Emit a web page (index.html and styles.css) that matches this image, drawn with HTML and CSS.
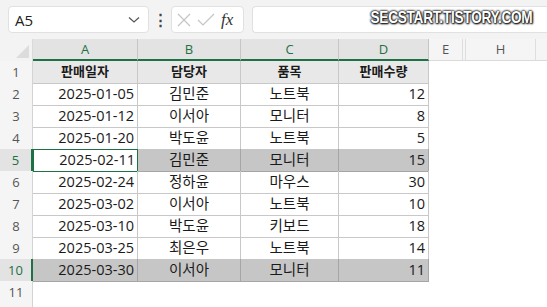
FILE: index.html
```html
<!DOCTYPE html>
<html lang="ko">
<head>
    <meta charset="UTF-8">
    <title>판매 내역</title>
    <link rel="stylesheet" href="styles.css">
</head>
<body>
<div class="toolbar">
    <div class="namebox">
        <span>A5</span>
        <svg width="12" height="8" viewBox="0 0 12 8"><path d="M1 1.5 L6 6 L11 1.5" fill="none" stroke="#555" stroke-width="1.2"/></svg>
    </div>
    <div class="dots">⋮</div>
    <div class="fxbox">
        <svg width="16" height="16" viewBox="0 0 16 16"><path d="M2 2 L14 14 M14 2 L2 14" stroke="#c4c4c4" stroke-width="1.2"/></svg>
        <svg width="18" height="16" viewBox="0 0 18 16"><path d="M1 8 L6 13 L17 2" fill="none" stroke="#c4c4c4" stroke-width="1.2"/></svg>
        <span class="fx">fx</span>
    </div>
    <div class="formula"></div>
    <div class="watermark">SECSTART.TISTORY.COM</div>
</div>

<div class="sheet">
    <div class="row hdr">
        <div class="corner"><span class="tri"></span></div>
        <div class="ch sel">A</div>
        <div class="ch sel">B</div>
        <div class="ch sel">C</div>
        <div class="ch sel">D</div>
        <div class="ch">E</div>
        <div class="ch hidden"></div>
        <div class="ch">H</div>
        <div class="ch last"></div>
    </div>
    <div class="row">
        <div class="rh">1</div>
        <div class="c head">판매일자</div>
        <div class="c head">담당자</div>
        <div class="c head">품목</div>
        <div class="c head">판매수량</div>
    </div>
    <div class="row">
        <div class="rh">2</div>
        <div class="c r">2025-01-05</div><div class="c m">김민준</div><div class="c m">노트북</div><div class="c r">12</div>
    </div>
    <div class="row">
        <div class="rh">3</div>
        <div class="c r">2025-01-12</div><div class="c m">이서아</div><div class="c m">모니터</div><div class="c r">8</div>
    </div>
    <div class="row">
        <div class="rh">4</div>
        <div class="c r">2025-01-20</div><div class="c m">박도윤</div><div class="c m">노트북</div><div class="c r">5</div>
    </div>
    <div class="row">
        <div class="rh sel">5</div>
        <div class="c r active">2025-02-11</div><div class="c m sel">김민준</div><div class="c m sel">모니터</div><div class="c r sel">15</div>
    </div>
    <div class="row">
        <div class="rh">6</div>
        <div class="c r">2025-02-24</div><div class="c m">정하윤</div><div class="c m">마우스</div><div class="c r">30</div>
    </div>
    <div class="row">
        <div class="rh">7</div>
        <div class="c r">2025-03-02</div><div class="c m">이서아</div><div class="c m">노트북</div><div class="c r">10</div>
    </div>
    <div class="row">
        <div class="rh">8</div>
        <div class="c r">2025-03-10</div><div class="c m">박도윤</div><div class="c m">키보드</div><div class="c r">18</div>
    </div>
    <div class="row">
        <div class="rh">9</div>
        <div class="c r">2025-03-25</div><div class="c m">최은우</div><div class="c m">노트북</div><div class="c r">14</div>
    </div>
    <div class="row">
        <div class="rh sel">10</div>
        <div class="c r sel">2025-03-30</div><div class="c m sel">이서아</div><div class="c m sel">모니터</div><div class="c r sel">11</div>
    </div>
    <div class="row">
        <div class="rh">11</div>
    </div>
    <div class="row stub">
        <div class="rh"></div>
    </div>
</div>
</body>
</html>
```

FILE: styles.css
```css
* {
    margin: 0;
    padding: 0;
    box-sizing: border-box;
}

body {
    font-family: "Open Sans", "Noto Sans CJK KR", sans-serif;
    background: #fff;
    color: #1a1a1a;
    width: 547px;
    height: 307px;
    overflow: hidden;
}

/* formula bar */
.toolbar {
    position: relative;
    height: 39px;
    background: #f3f3f3;
    display: flex;
    align-items: flex-start;
    padding: 6px 0 0 8px;
}

.namebox {
    width: 141px;
    height: 27px;
    background: #fff;
    border: 1px solid #e1e1e1;
    border-radius: 4px;
    display: flex;
    align-items: center;
    justify-content: space-between;
    padding: 0 8px 0 6px;
    font-size: 15px;
    color: #222;
}

.dots {
    width: 22px;
    text-align: center;
    font-size: 15px;
    line-height: 27px;
    color: #444;
    font-weight: bold;
}

.fxbox {
    width: 73px;
    height: 27px;
    background: #fff;
    border: 1px solid #e1e1e1;
    border-radius: 4px;
    display: flex;
    align-items: center;
    gap: 5px;
    padding: 0 0 0 4px;
}

.fx {
    font-family: "Liberation Serif", serif;
    font-style: italic;
    font-size: 17px;
    color: #333;
    margin-left: 1px;
}

.formula {
    flex: 1;
    height: 27px;
    margin-left: 8px;
    background: #fff;
    border: 1px solid #e1e1e1;
    border-right: none;
    border-radius: 4px 0 0 4px;
}

.watermark {
    position: absolute;
    right: 15px;
    top: 8px;
    font-family: "Liberation Sans", sans-serif;
    font-weight: bold;
    font-size: 17px;
    letter-spacing: -0.3px;
    color: #fff;
    transform: scaleX(0.8);
    transform-origin: right center;
    text-shadow: 0 0 2px #111, 0 0 2px #111, 0 0 3px #333, 1px 1px 2px #000;
}

/* grid */
.row {
    display: grid;
    grid-template-columns: 33px 105px 103px 98px 90px 34px 3px 70px 1fr;
    height: 22px;
}

.corner {
    background: #f3f3f3;
    border-right: 1px solid #dadada;
    position: relative;
}

.tri {
    position: absolute;
    right: 3px;
    bottom: 3px;
    width: 0;
    height: 0;
    border-left: 13px solid transparent;
    border-bottom: 13px solid #dcdcdc;
}

.ch {
    background: #f5f5f5;
    border-right: 1px solid #dedede;
    border-bottom: 1px solid #dadada;
    text-align: center;
    font-size: 13px;
    line-height: 21px;
    color: #555;
}

.ch.sel {
    background: #e3e3e3;
    color: #1e7145;
    border-right-color: #c6c6c6;
    border-bottom: 2px solid #1e7145;
    line-height: 20px;
}

.ch.last {
    border-right: none;
}

.rh {
    grid-column: 1;
    background: #f5f5f5;
    border-right: 1px solid #d4d4d4;
    border-bottom: 1px solid #e2e2e2;
    text-align: center;
    font-size: 13px;
    line-height: 22px;
    color: #555;
}

.rh.sel {
    background: #e3e3e3;
    color: #1e7145;
    border-right: 2px solid #1e7145;
}

.c {
    border-right: 1px solid #c8c8c8;
    border-bottom: 1px solid #c8c8c8;
    font-size: 14.5px;
    line-height: 21px;
    padding: 0 3px;
    white-space: nowrap;
    overflow: hidden;
}

.c.r {
    text-align: right;
}

.c.m {
    text-align: center;
}

.c.head {
    background: #e8e8e8;
    font-weight: bold;
    font-size: 13px;
    text-align: center;
}

.c.sel {
    background: #c6c6c6;
    border-color: #a6a6a6;
}

.c.active {
    background: #fff;
    border: 1px solid #1e7145;
    box-shadow: inset 0 0 0 1px #fff;
    line-height: 20px;
    padding-right: 2px;
}
```
